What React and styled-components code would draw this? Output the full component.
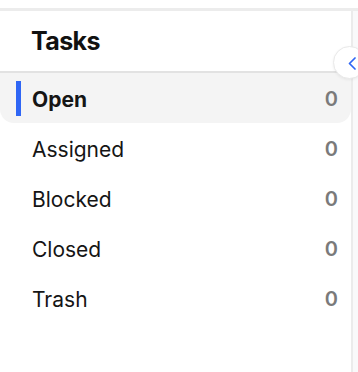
import React from 'react';
import styled, { createGlobalStyle } from "styled-components";

const GlobalStyle = createGlobalStyle`
    *, *::before, *::after {
        box-sizing: border-box;
    }
    body {
        margin: 0;
        background: #fff;
        font-family: Inter, "Noto Sans", sans-serif;
    }
`;

const items = [
    { name: "Open", count: 0 },
    { name: "Assigned", count: 0 },
    { name: "Blocked", count: 0 },
    { name: "Closed", count: 0 },
    { name: "Trash", count: 0 },
];

const App = () => {
    const [active, setActive] = React.useState("Open");

    return <Page>
        <GlobalStyle />
        <Frame>
            <Sidebar>
                <Header>
                    <Title>Tasks</Title>
                </Header>
                <List>
                    {items.map(item =>
                        <Row key={item.name} active={item.name === active} onClick={() => setActive(item.name)}>
                            {item.name === active && <Marker />}
                            <Label active={item.name === active}>{item.name}</Label>
                            <Count>{item.count}</Count>
                        </Row>)}
                </List>
            </Sidebar>
            <Gutter />
            <CollapseButton aria-label="Collapse">
                <svg width="9" height="13" viewBox="0 0 9 13" fill="none">
                    <path d="M7 1 L1.5 6.5 L7 12" stroke="#2f66f5" strokeWidth="1.7" strokeLinecap="round" strokeLinejoin="round" />
                </svg>
            </CollapseButton>
        </Frame>
    </Page>
}

const Page = styled.div`
    padding-top: 8px;
    height: 372px;
    overflow: hidden;
`;
const Frame = styled.div`
    position: relative;
    display: flex;
    height: 100%;
    border-top: 3px solid #ececec;
`;
const Sidebar = styled.div`
    width: 353px;
    border-right: 2px solid #ebebeb;
    display: flex;
    flex-direction: column;
`;
const Gutter = styled.div`
    flex: 1;
    background: #f9f9fa;
`;
const Header = styled.div`
    height: 62px;
    display: flex;
    align-items: center;
    padding: 0 0 1px 31px;
    border-bottom: 2px solid #e2e2e2;
`;
const Title = styled.h2`
    margin: 0;
    font-size: 25px;
    font-weight: 700;
    letter-spacing: -0.6px;
    color: #111;
`;
const List = styled.div`
    display: flex;
    flex-direction: column;
`;
const Row = styled.div`
    position: relative;
    height: 50px;
    display: flex;
    align-items: center;
    justify-content: space-between;
    padding: 2px 13px 0 32px;
    border-radius: 0 0 14px 14px;
    background: ${p => p.active ? "#f4f4f4" : "transparent"};
    cursor: pointer;
`;
const Marker = styled.span`
    position: absolute;
    left: 16px;
    top: 8px;
    bottom: 7px;
    width: 5px;
    background: #2f66f5;
`;
const Label = styled.span`
    font-size: 21px;
    font-weight: ${p => p.active ? 700 : 400};
    color: #151515;
`;
const Count = styled.span`
    font-size: 20px;
    font-weight: 600;
    color: #7a7a7a;
`;
const CollapseButton = styled.button`
    position: absolute;
    left: 333px;
    top: 35px;
    width: 33px;
    height: 33px;
    border-radius: 50%;
    border: 1px solid #e9e9e9;
    background: #fff;
    box-shadow: 0 1px 3px rgba(0, 0, 0, 0.06);
    display: flex;
    align-items: center;
    padding: 2px 0 0 14px;
    cursor: pointer;
`;

export default App
